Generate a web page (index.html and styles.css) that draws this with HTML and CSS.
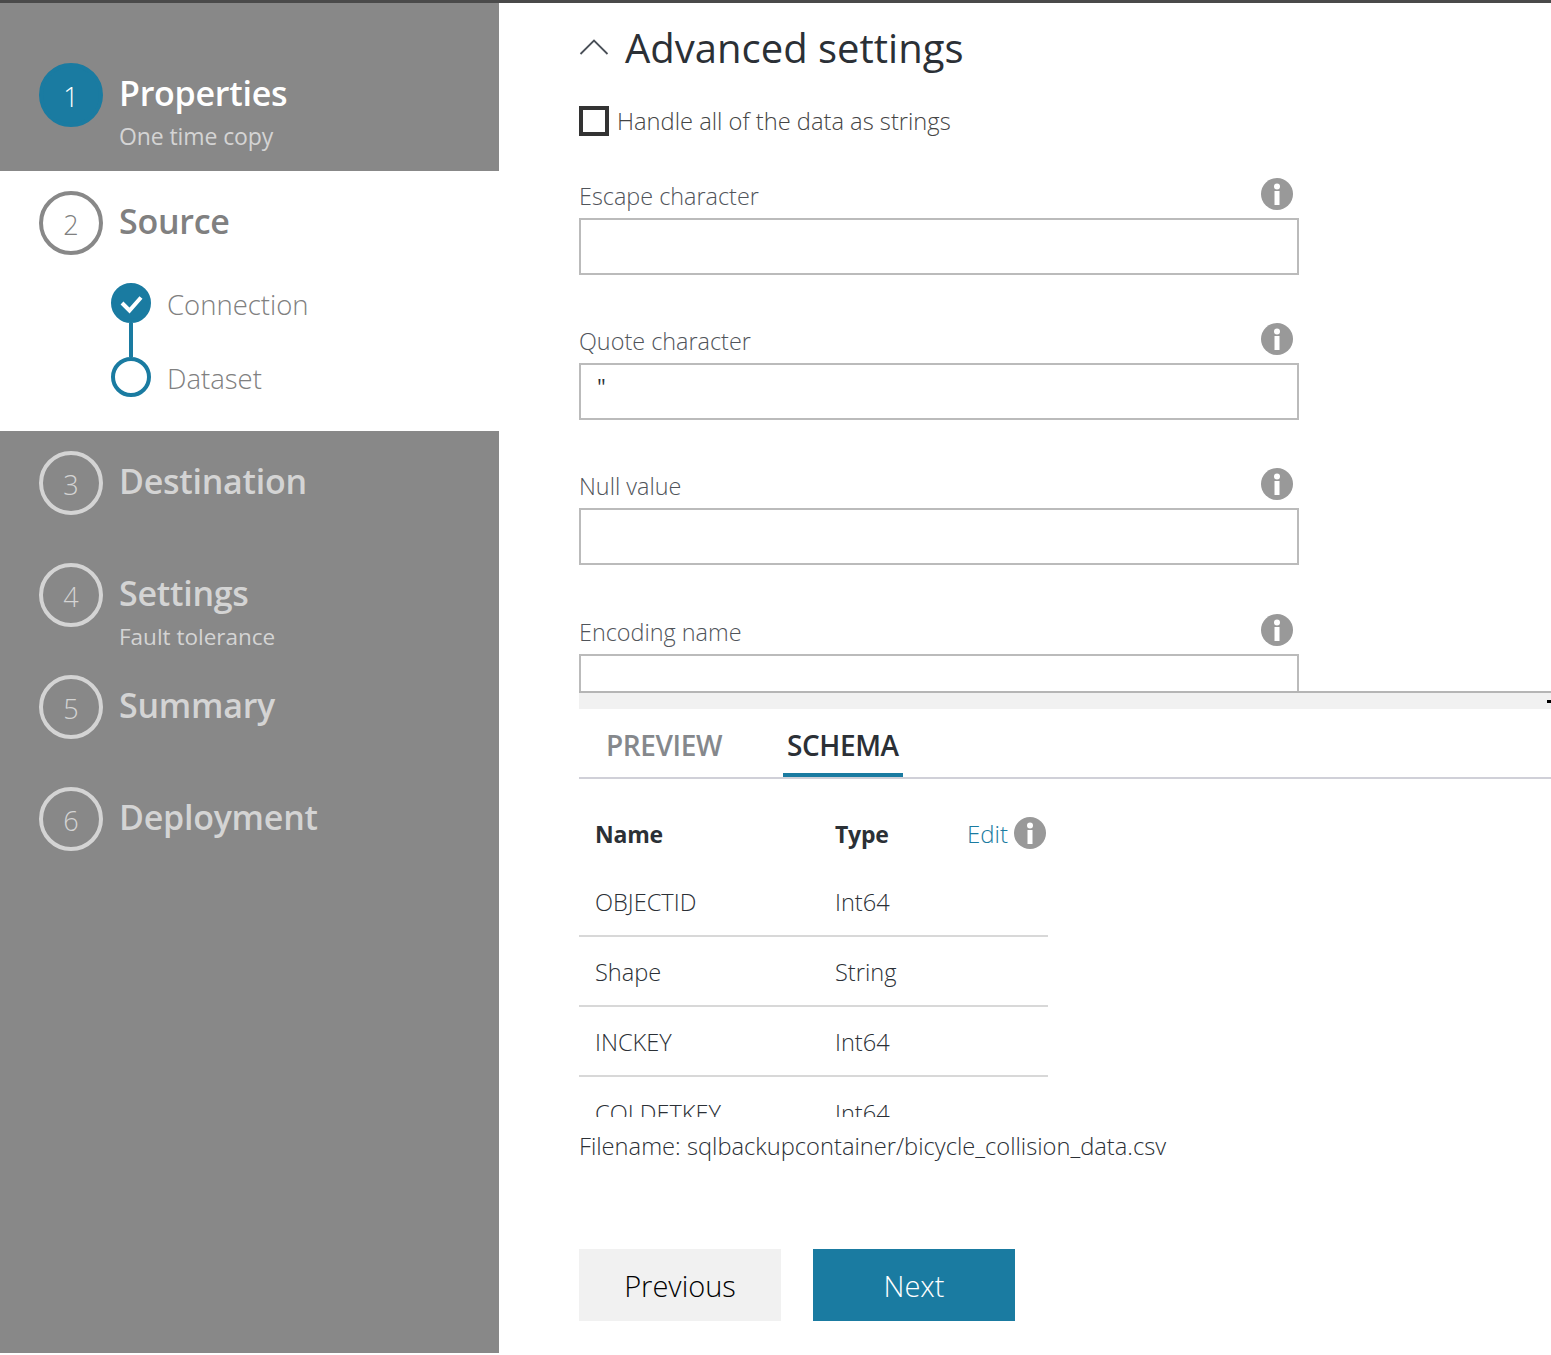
FILE: index.html

```html
<!DOCTYPE html>
<html lang="en">
<head>
  <meta charset="UTF-8">
  <title>Copy Data - Advanced settings</title>
  <link rel="stylesheet" href="styles.css">
</head>
<body>
  <div class="app">
    <aside class="wizard">
      <div class="step step-current">
        <div class="step-num">1</div>
        <div class="step-text">
          <div class="step-title">Properties</div>
          <div class="step-sub">One time copy</div>
        </div>
      </div>
      <div class="step-open">
        <div class="step step-active">
          <div class="step-num">2</div>
          <div class="step-text">
            <div class="step-title">Source</div>
          </div>
        </div>
        <div class="substeps">
          <div class="substep">
            <div class="dot dot-done">
              <svg width="32" height="32" viewBox="0 0 32 32"><path d="M7 16 L14.5 23.5 L26 10.5" fill="none" stroke="#fff" stroke-width="4"/></svg>
            </div>
            <span>Connection</span>
          </div>
          <div class="substep-line"></div>
          <div class="substep">
            <div class="dot dot-open"></div>
            <span>Dataset</span>
          </div>
        </div>
      </div>
      <div class="step">
        <div class="step-num">3</div>
        <div class="step-text"><div class="step-title">Destination</div></div>
      </div>
      <div class="step">
        <div class="step-num">4</div>
        <div class="step-text">
          <div class="step-title">Settings</div>
          <div class="step-sub step-sub-small">Fault tolerance</div>
        </div>
      </div>
      <div class="step">
        <div class="step-num">5</div>
        <div class="step-text"><div class="step-title">Summary</div></div>
      </div>
      <div class="step">
        <div class="step-num">6</div>
        <div class="step-text"><div class="step-title">Deployment</div></div>
      </div>
    </aside>

    <main class="content">
      <section class="settings">
        <div class="settings-head">
          <svg class="chevron" width="30" height="18" viewBox="0 0 30 18"><path d="M1.5 16 L15 2.5 L28.5 16" fill="none" stroke="#4a5058" stroke-width="1.8"/></svg>
          <h2>Advanced settings</h2>
        </div>
        <label class="check">
          <span class="check-box"></span>
          <span>Handle all of the data as strings</span>
        </label>

        <div class="field">
          <div class="field-label">
            <span>Escape character</span>
            <svg class="info" width="32" height="32" viewBox="0 0 32 32"><circle cx="16" cy="16" r="16" fill="#999"/><circle cx="16" cy="8.5" r="3" fill="#fff"/><rect x="13.5" y="13" width="5" height="14" fill="#fff"/></svg>
          </div>
          <div class="field-input"></div>
        </div>
        <div class="field">
          <div class="field-label">
            <span>Quote character</span>
            <svg class="info" width="32" height="32" viewBox="0 0 32 32"><circle cx="16" cy="16" r="16" fill="#999"/><circle cx="16" cy="8.5" r="3" fill="#fff"/><rect x="13.5" y="13" width="5" height="14" fill="#fff"/></svg>
          </div>
          <div class="field-input">"</div>
        </div>
        <div class="field field-tall">
          <div class="field-label">
            <span>Null value</span>
            <svg class="info" width="32" height="32" viewBox="0 0 32 32"><circle cx="16" cy="16" r="16" fill="#999"/><circle cx="16" cy="8.5" r="3" fill="#fff"/><rect x="13.5" y="13" width="5" height="14" fill="#fff"/></svg>
          </div>
          <div class="field-input"></div>
        </div>
        <div class="field">
          <div class="field-label">
            <span>Encoding name</span>
            <svg class="info" width="32" height="32" viewBox="0 0 32 32"><circle cx="16" cy="16" r="16" fill="#999"/><circle cx="16" cy="8.5" r="3" fill="#fff"/><rect x="13.5" y="13" width="5" height="14" fill="#fff"/></svg>
          </div>
          <div class="field-input"></div>
        </div>
      </section>

      <div class="splitter"><span class="splitter-grip"></span></div>

      <div class="tabs">
        <div class="tab">PREVIEW</div>
        <div class="tab tab-on">SCHEMA</div>
      </div>

      <div class="schema">
        <div class="row row-head">
          <div class="col-name">Name</div>
          <div class="col-type">Type</div>
          <div class="col-edit">
            <a class="edit">Edit</a>
            <svg width="32" height="32" viewBox="0 0 32 32"><circle cx="16" cy="16" r="16" fill="#999"/><circle cx="16" cy="8.5" r="3" fill="#fff"/><rect x="13.5" y="13" width="5" height="14" fill="#fff"/></svg>
          </div>
        </div>
        <div class="row"><div class="col-name">OBJECTID</div><div class="col-type">Int64</div></div>
        <div class="row"><div class="col-name">Shape</div><div class="col-type">String</div></div>
        <div class="row"><div class="col-name">INCKEY</div><div class="col-type">Int64</div></div>
        <div class="row"><div class="col-name">COLDETKEY</div><div class="col-type">Int64</div></div>
      </div>

      <div class="filename">Filename: sqlbackupcontainer/bicycle_collision_data.csv</div>

      <div class="actions">
        <button class="btn">Previous</button>
        <button class="btn btn-primary">Next</button>
      </div>
    </main>
  </div>
</body>
</html>
```

FILE: styles.css

```css
html, body {
  margin: 0;
  padding: 0;
}
body {
  font-family: "Open Sans", "Noto Sans", sans-serif;
  color: #2b3036;
  background: #fff;
  overflow: hidden;
}
.app {
  display: flex;
  height: 1350px;
  border-top: 3px solid #4a4a4a;
}

/* wizard */
.wizard {
  width: 499px;
  flex: none;
  background: #888;
  color: #d4d4d4;
  padding-top: 60px;
  box-sizing: border-box;
}
.step {
  display: flex;
  align-items: flex-start;
  gap: 16px;
  padding-left: 39px;
  height: 64px;
  margin-bottom: 48px;
}
.step-current {
  margin-bottom: 20px;
  height: 88px;
}
.step-num {
  width: 64px;
  height: 64px;
  flex: none;
  box-sizing: border-box;
  border: 4px solid #d4d4d4;
  border-radius: 50%;
  display: flex;
  align-items: center;
  justify-content: center;
  font-size: 27px;
  font-weight: 300;
  padding-top: 3px;
}
.step-text {
  padding-top: 7px;
}
.step-title {
  font-size: 34px;
  line-height: 46px;
  font-weight: 600;
  letter-spacing: -0.25px;
  white-space: nowrap;
}
.step-sub {
  font-size: 23px;
  line-height: 30px;
  margin-top: 5px;
  letter-spacing: -0.1px;
  white-space: nowrap;
}
.step-sub-small {
  font-size: 22.5px;
  letter-spacing: 0;
  margin-top: 6px;
}
.step-current .step-num {
  background: #1a7ba1;
  border-color: #1a7ba1;
  color: #fff;
}
.step-current .step-title {
  color: #fff;
}
.step-open {
  background: #fff;
  color: #808080;
  padding-top: 20px;
  height: 260px;
  box-sizing: border-box;
  margin-bottom: 20px;
}
.step-open .step {
  margin-bottom: 28px;
}
.step-active .step-num {
  border-color: #888;
}
.substeps {
  padding-left: 111px;
}
.substep {
  display: flex;
  align-items: center;
  height: 40px;
  gap: 16px;
  font-size: 27.5px;
  font-weight: 300;
}
.substep span {
  padding-top: 2px;
}
.dot {
  width: 40px;
  height: 40px;
  flex: none;
  box-sizing: border-box;
  border-radius: 50%;
  border: 4px solid #1a7ba1;
}
.dot-done {
  background: #1a7ba1;
}
.dot-done svg {
  display: block;
}
.substep-line {
  width: 4px;
  height: 34px;
  margin-left: 18px;
  background: #1a7ba1;
}

/* right side */
.content {
  flex: 1;
  min-width: 0;
  padding-left: 80px;
  display: flex;
  flex-direction: column;
}
.settings {
  height: 688px;
  overflow: hidden;
  flex: none;
}
.settings-head {
  display: flex;
  align-items: center;
  height: 90px;
  gap: 16px;
}
.settings-head h2 {
  margin: 0 0 2px;
  font-size: 40px;
  font-weight: 400;
  white-space: nowrap;
}
.chevron {
  flex: none;
  margin-bottom: 2px;
}
.check {
  display: flex;
  align-items: center;
  gap: 8px;
  height: 30px;
  margin-top: 13px;
  margin-bottom: 38px;
  font-size: 23.7px;
  font-weight: 300;
  color: #444;
}
.check-box {
  width: 30px;
  height: 30px;
  box-sizing: border-box;
  border: 4px solid #333;
}
.field {
  width: 720px;
  height: 145px;
}
.field-tall {
  height: 146px;
}
.field-label {
  display: flex;
  justify-content: space-between;
  align-items: flex-end;
  font-size: 23.4px;
  font-weight: 300;
  color: #50545a;
  height: 37px;
  padding-right: 6px;
  box-sizing: border-box;
  width: 720px;
}
.field-label span {
  line-height: 30px;
}
.field-label svg {
  margin-bottom: 1px;
}
.field-input {
  height: 57px;
  margin-top: 7px;
  box-sizing: border-box;
  border: 2px solid #bbb;
  padding-left: 16px;
  font-size: 22px;
  line-height: 42px;
}
.splitter {
  height: 16px;
  flex: none;
  background: #f1f1f1;
  border-top: 2px solid #b5b5b5;
  position: relative;
}
.splitter-grip {
  position: absolute;
  right: 0;
  top: 7px;
  width: 4px;
  height: 3px;
  background: #000;
}
.tabs {
  display: flex;
  height: 68px;
  flex: none;
  gap: 57px;
  padding-left: 23px;
  border-bottom: 2px solid #d0d0d8;
  font-size: 28px;
  font-weight: 600;
  letter-spacing: -0.4px;
}
.tab {
  padding: 0 4px;
  box-sizing: border-box;
  line-height: 72px;
  color: #85888c;
  white-space: nowrap;
}
.tab-on {
  color: #2b3036;
  border-bottom: 4px solid #1a7ba1;
}
.schema {
  width: 469px;
  height: 338px;
  overflow: hidden;
  flex: none;
}
.row {
  display: flex;
  align-items: center;
  height: 70px;
  box-sizing: border-box;
  padding-top: 2px;
  border-bottom: 2px solid #d8d8d8;
  font-size: 23.6px;
  font-weight: 300;
  padding-left: 16px;
}
.row-head {
  height: 88px;
  padding-top: 22px;
  border-bottom: none;
  font-size: 23px;
  font-weight: 700;
  letter-spacing: -0.2px;
}
.row:last-child {
  border-bottom: none;
}
.col-name {
  width: 240px;
  flex: none;
}
.col-type {
  width: 132px;
  flex: none;
}
.col-edit {
  display: flex;
  align-items: center;
  gap: 6px;
  margin-top: -2px;
  font-size: 24px;
  font-weight: 300;
  letter-spacing: 0;
}
.edit {
  color: #1a7ba1;
}
.filename {
  height: 132px;
  flex: none;
  font-size: 23.7px;
  font-weight: 300;
  line-height: 58px;
  white-space: nowrap;
}
.actions {
  display: flex;
  gap: 32px;
}
.btn {
  width: 202px;
  height: 72px;
  border: none;
  background: #f1f1f1;
  color: #000;
  font-family: inherit;
  font-size: 29px;
  font-weight: 300;
  padding: 0;
}
.btn-primary {
  background: #1a7ba1;
  color: #fff;
}
```
